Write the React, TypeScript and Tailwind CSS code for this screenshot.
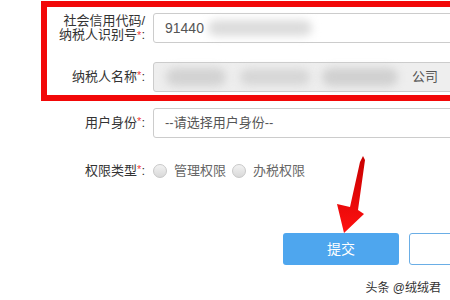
const font = { fontFamily: '"Liberation Sans", "Noto Sans CJK SC", sans-serif' };

function Req({ text }: { text: string }) {
  return (
    <>
      {text}
      <span className="text-[#f03c3c] text-[11px] align-top">*</span>:
    </>
  );
}

function Radio({ label }: { label: string }) {
  return (
    <label className="flex items-center gap-[7px]">
      <span className="size-[14px] rounded-full border border-[#c8c8c8] bg-gradient-to-b from-[#f2f2f2] to-[#d9d9d9]" />
      <span className="text-[#666]">{label}</span>
    </label>
  );
}

export default function App() {
  return (
    <div className="relative w-[450px] h-[300px] overflow-hidden bg-white text-[13px] text-[#333]" style={font}>
      <div className="w-[560px]">
        {/* highlighted block */}
        <div className="ml-[41px] mt-[1px] border-[6px] border-[#f20808] pt-[6px] pb-[3px]">
          <div className="flex items-center gap-[8px]">
            <div className="w-[98px] text-right leading-[14px]">
              社会信用代码/
              <br />
              纳税人识别号<Req text="" />
            </div>
            <div className="flex-1 h-[30px] rounded-[3px] border border-[#ccc] bg-white flex items-center pl-[11px] text-[#555] text-[14px]">
              <span>91440</span>
              <span className="ml-[4px] h-[16px] w-[104px] rounded-full bg-[#dcdcdc] blur-[4px]" />
            </div>
          </div>
          <div className="flex items-center gap-[8px] mt-[19px]">
            <div className="w-[98px] text-right">
              <Req text="纳税人名称" />
            </div>
            <div className="flex-1 h-[30px] rounded-[3px] border border-[#ccc] bg-[#eeeeee] flex items-center pl-[12px] text-[#555]">
              <span className="h-[18px] w-[60px] rounded-full bg-[#d2d2d2] blur-[4px]" />
              <span className="ml-[14px] h-[16px] w-[70px] rounded-full bg-[#d6d6d6] blur-[4px]" />
              <span className="ml-[12px] h-[18px] w-[76px] rounded-full bg-[#d0d0d0] blur-[4px]" />
              <span className="ml-[14px]">公司</span>
            </div>
          </div>
        </div>

        <div className="flex items-center gap-[8px] mt-[7px]">
          <div className="w-[145px] text-right">
            <Req text="用户身份" />
          </div>
          <div className="flex-1 h-[30px] rounded-[3px] border border-[#ccc] bg-white flex items-center pl-[11px] text-[#555]">
            --请选择用户身份--
          </div>
        </div>

        <div className="flex items-center gap-[8px] mt-[23px] h-[20px]">
          <div className="w-[145px] text-right">
            <Req text="权限类型" />
          </div>
          <div className="flex items-center gap-[6px]">
            <Radio label="管理权限" />
            <Radio label="办税权限" />
          </div>
        </div>

        <div className="flex gap-[10px] mt-[52px] ml-[283px]">
          <button className="w-[116px] h-[32px] rounded-[3px] bg-[#4ea6ee] text-white text-[14px]">提交</button>
          <button className="w-[116px] h-[32px] rounded-[3px] border border-[#6aaee6] bg-white" />
        </div>
      </div>

      {/* annotation arrow */}
      <svg className="absolute left-0 top-0" width="450" height="300" viewBox="0 0 450 300">
        <defs>
          <linearGradient id="ar" x1="0" y1="0" x2="0" y2="1">
            <stop offset="0" stopColor="#c80000" />
            <stop offset="1" stopColor="#ff1010" />
          </linearGradient>
        </defs>
        <polygon
          points="363,156 365,160 358,210 364,214 344,233 337,204 350,207 360,162"
          fill="url(#ar)"
        />
      </svg>

      <div className="absolute right-[9px] top-[279px] text-[12px] text-[#333]">头条 @绒绒君</div>
    </div>
  );
}
